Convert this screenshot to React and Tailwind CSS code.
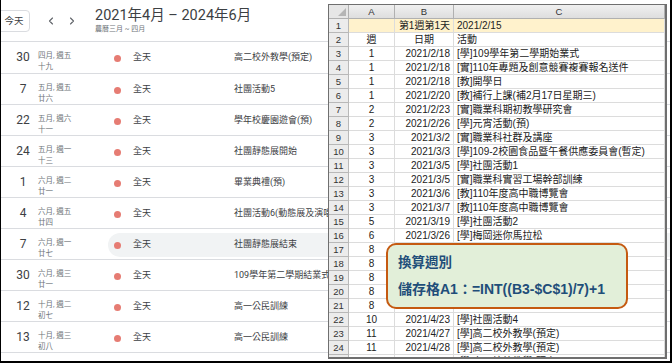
import { ChevronLeft, ChevronRight } from 'lucide-react'

const CAL_FONT = { fontFamily: 'Roboto, "Noto Sans CJK TC", sans-serif' }
const SHEET_FONT = { fontFamily: '"Liberation Sans", "Noto Sans CJK TC", sans-serif' }

const events = [
  { day: '30', month: '四月, 週五', lunar: '十九', title: '高二校外教學(預定)' },
  { day: '7', month: '五月, 週五', lunar: '廿六', title: '社團活動5' },
  { day: '22', month: '五月, 週六', lunar: '十一', title: '學年校慶園遊會(預)' },
  { day: '24', month: '五月, 週一', lunar: '十三', title: '社團靜態展開始' },
  { day: '1', month: '六月, 週二', lunar: '廿一', title: '畢業典禮(預)' },
  { day: '4', month: '六月, 週五', lunar: '廿四', title: '社團活動6(動態展及演唱會)' },
  { day: '7', month: '六月, 週一', lunar: '廿七', title: '社團靜態展結束', hover: true },
  { day: '30', month: '六月, 週三', lunar: '廿一', title: '109學年第二學期結業式' },
  { day: '12', month: '十月, 週二', lunar: '初七', title: '高一公民訓練' },
  { day: '13', month: '十月, 週三', lunar: '初八', title: '高一公民訓練' },
]

// rows 17-21 sit under the callout, so only the week column shows
const rows = [
  ['1', '2021/2/18', '[學]109學年第二學期始業式'],
  ['1', '2021/2/18', '[實]110年專題及創意競賽複賽報名送件'],
  ['1', '2021/2/18', '[教]開學日'],
  ['1', '2021/2/20', '[教]補行上課(補2月17日星期三)'],
  ['2', '2021/2/23', '[實]職業科期初教學研究會'],
  ['2', '2021/2/26', '[學]元宵活動(預)'],
  ['3', '2021/3/2', '[實]職業科社群及講座'],
  ['3', '2021/3/3', '[學]109-2校園食品暨午餐供應委員會(暫定)'],
  ['3', '2021/3/5', '[學]社團活動1'],
  ['3', '2021/3/5', '[實]職業科實習工場幹部訓練'],
  ['3', '2021/3/6', '[教]110年度高中職博覽會'],
  ['3', '2021/3/7', '[教]110年度高中職博覽會'],
  ['5', '2021/3/19', '[學]社團活動2'],
  ['6', '2021/3/26', '[學]梅岡迷你馬拉松'],
  ['8', '', ''],
  ['8', '', ''],
  ['8', '', ''],
  ['8', '', ''],
  ['8', '', ''],
  ['10', '2021/4/23', '[學]社團活動4'],
  ['11', '2021/4/27', '[學]高二校外教學(預定)'],
  ['11', '2021/4/28', '[學]高二校外教學(預定)'],
  ['11', '2021/4/29', '[學]高二校外教學(預定)'],
]

function CalendarRow({ ev, first }) {
  return (
    <div className={`flex border-b border-[#dadce0] ${first ? 'h-[32px]' : 'h-[31px]'}`}>
      <div className="ml-[7px] w-[30px] pt-[8px] text-center text-[12px] leading-[14px] text-[#3c4043]">
        {ev.day}
      </div>
      <div className="w-[70px] pt-[8px] text-[7.5px] leading-[11px] text-[#70757a]">
        <div>{ev.month}</div>
        <div>{ev.lunar}</div>
      </div>
      <div
        className={`mt-[4px] flex h-[24px] flex-1 items-center rounded-l-full pl-[6px] ${
          ev.hover ? 'bg-[#f1f3f4]' : ''
        }`}
      >
        <span className="h-[7px] w-[7px] shrink-0 rounded-full bg-[#e67c73]" />
        <span className="ml-[12px] w-[101px] shrink-0 text-[9px] text-[#3c4043]">全天</span>
        <span className="whitespace-nowrap text-[9px] text-[#3c4043]">{ev.title}</span>
      </div>
    </div>
  )
}

function Cell({ children, className = '' }) {
  return (
    <div className={`h-[14px] overflow-hidden whitespace-nowrap border-b border-r border-[#dcdcdc] leading-[13px] ${className}`}>
      {children}
    </div>
  )
}

function RowHead({ n }) {
  return (
    <div className="h-[14px] border-b border-r border-[#b8b8b8] bg-[#ececec] text-center text-[9.5px] leading-[13px] text-[#333]">
      {n}
    </div>
  )
}

function Sheet() {
  return (
    <div
      className="absolute left-[327px] top-[4px] h-[355px] w-[339px] overflow-hidden border-b-2 border-l border-r-2 border-t border-[#6f6f6f] bg-white"
      style={SHEET_FONT}
    >
      <div className="grid grid-cols-[20px_46px_59px_1fr] text-[10px] text-[#222]">
        <div className="relative h-[14px] border-b border-r border-[#b0b0b0] bg-[#e6e6e6]">
          <span className="absolute bottom-[2px] right-[2px] h-0 w-0 border-b-[8px] border-l-[8px] border-b-[#b5b5b5] border-l-transparent" />
        </div>
        {['A', 'B', 'C'].map((c) => (
          <div
            key={c}
            className="h-[14px] border-b border-r border-[#b0b0b0] bg-gradient-to-b from-[#f0f0f0] to-[#dedede] text-center text-[9.5px] leading-[13px] text-[#333]"
          >
            {c}
          </div>
        ))}

        <RowHead n="1" />
        <Cell className="bg-[#fff2cc]" />
        <Cell className="bg-[#fff2cc] pr-[3px] text-right">第1週第1天</Cell>
        <Cell className="bg-[#fff2cc] pl-[3px]">2021/2/15</Cell>

        <RowHead n="2" />
        <Cell className="text-center">週</Cell>
        <Cell className="text-center">日期</Cell>
        <Cell className="pl-[3px]">活動</Cell>

        {rows.map((r, i) => (
          <div key={i} className="contents">
            <RowHead n={i + 3} />
            <Cell className="text-center">{r[0]}</Cell>
            <Cell className="pr-[3px] text-right">{r[1]}</Cell>
            <Cell className="pl-[3px]">{r[2]}</Cell>
          </div>
        ))}
      </div>
    </div>
  )
}

export default function App() {
  return (
    <div className="relative h-[363px] w-[672px] overflow-hidden border-b-2 border-l border-r-2 border-black bg-white">
      <div style={CAL_FONT}>
        <div className="flex h-[42px] items-start border-b border-[#dadce0]">
          <div className="-ml-[9px] mt-[10px] flex h-[22px] w-[38px] items-center justify-center rounded-[4px] border border-[#dadce0] pl-[6px] text-[9.5px] text-[#3c4043]">
            今天
          </div>
          <div className="ml-[15px] mt-[15px] flex items-center gap-[9px] text-[#5f6368]">
            <ChevronLeft className="h-[12px] w-[12px]" strokeWidth={2.2} />
            <ChevronRight className="h-[12px] w-[12px]" strokeWidth={2.2} />
          </div>
          <div className="ml-[17px] mt-[6px]">
            <div className="text-[14.5px] leading-[19px] text-[#3c4043]">2021年4月 – 2024年6月</div>
            <div className="text-[7px] leading-[9px] text-[#70757a]">農曆三月 ~ 四月</div>
          </div>
        </div>
        {events.map((ev, i) => (
          <CalendarRow key={i} ev={ev} first={i === 0} />
        ))}
      </div>

      <Sheet />

      <div
        className="absolute left-[385px] top-[243px] h-[66px] w-[242px] rounded-[10px] border-2 border-[#c55a11] bg-[#e2efd9] pl-[10px] pt-[8px] font-bold text-[#1f4e79]"
        style={SHEET_FONT}
      >
        <div className="text-[13.5px] leading-[20px]">換算週別</div>
        <div className="mt-[6px] text-[14px] leading-[20px]">儲存格A1：=INT((B3-$C$1)/7)+1</div>
      </div>
    </div>
  )
}
